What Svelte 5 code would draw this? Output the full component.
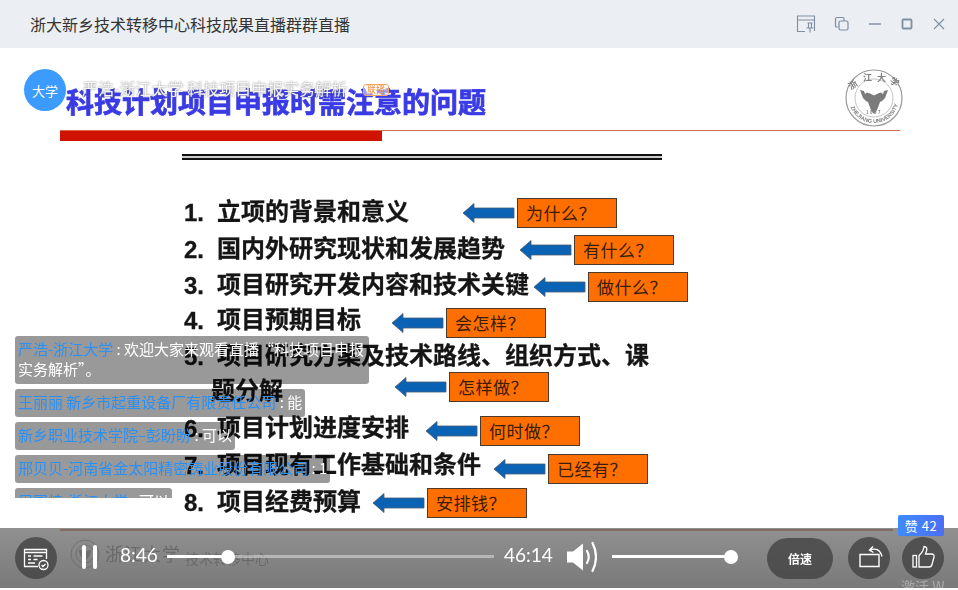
<script>
  const items = [
    { n: '1.', t: '立项的背景和意义', y: 210 },
    { n: '2.', t: '国内外研究现状和发展趋势', y: 247 },
    { n: '3.', t: '项目研究开发内容和技术关键', y: 283 },
    { n: '4.', t: '项目预期目标', y: 318 },
    { n: '5.', t: '项目研究方案及技术路线、组织方式、课', y: 354 },
    { n: '', t: '题分解', y: 389, indent: true },
    { n: '6.', t: '项目计划进度安排', y: 426 },
    { n: '7.', t: '项目现有工作基础和条件', y: 463 },
    { n: '8.', t: '项目经费预算', y: 500 }
  ];
  const tags = [
    { t: '为什么？', x: 517, y: 198 },
    { t: '有什么？', x: 574, y: 235 },
    { t: '做什么？', x: 588, y: 272 },
    { t: '会怎样？', x: 446, y: 308 },
    { t: '怎样做？', x: 449, y: 372 },
    { t: '何时做？', x: 480, y: 416 },
    { t: '已经有？', x: 548, y: 454 },
    { t: '安排钱？', x: 427, y: 488 }
  ];
  const chat = [
    { name: '严浩-浙江大学', msg: '欢迎大家来观看直播“科技项目申报实务解析”。' },
    { name: '王丽丽 新乡市起重设备厂有限责任公司', msg: '能' },
    { name: '新乡职业技术学院–彭盼盼', msg: '可以' },
    { name: '邢贝贝-河南省金太阳精密铸业股份有限公司', msg: '1' },
    { name: '周国炜-浙江大学', msg: '可以' }
  ];
</script>

<div class="win">
  <header class="head">
    <h1>浙大新乡技术转移中心科技成果直播群群直播</h1>
    <div class="tools">
      <svg width="20" height="20" viewBox="0 0 20 20" fill="none" stroke="#7f8fa3" stroke-width="1.100">
        <path d="M9 17.500H1.500V2h17v15M1.500 6h17" />
        <path d="M11.500 9h5M12.500 9v5h3V9M10.500 14h7M14 14v4.500" />
      </svg>
      <svg width="16" height="16" viewBox="0 0 16 16" fill="none" stroke="#7f8fa3" stroke-width="1.200">
        <path d="M4 11H2.500a1 1 0 0 1-1-1V3a1.500 1.500 0 0 1 1.500-1.500h6a1 1 0 0 1 1 1V5" />
        <rect x="5" y="5" width="9" height="9" rx="1.500" />
      </svg>
      <svg width="14" height="14" viewBox="0 0 14 14" stroke="#7f8fa3" stroke-width="1.400"><path d="M1 7h12" /></svg>
      <svg width="14" height="14" viewBox="0 0 14 14" fill="none" stroke="#7f8fa3" stroke-width="1.800"><rect x="2.500" y="2.500" width="9" height="9" rx="1" /></svg>
      <svg width="14" height="14" viewBox="0 0 14 14" stroke="#7f8fa3" stroke-width="1.100"><path d="M2 2l10 10M12 2L2 12" /></svg>
    </div>
  </header>

  <main class="stage">
    <div class="slide">
      <div class="slide-title">科技计划项目申报时需注意的问题</div>
      <div class="rule-thin"></div>
      <div class="rule-red"></div>
      <div class="rule-double"></div>

      <svg class="seal" width="58" height="60" viewBox="0 0 58 60">
        <circle cx="29" cy="29" r="28" fill="#fff" stroke="#9a9a9a" stroke-width="1.200" />
        <circle cx="29" cy="29" r="19" fill="none" stroke="#b5b5b5" stroke-width="0.800" />
        <path d="M15 21l4 1 1 3 2-1.500 3 1 4 2 4-2 3-1 2 1.500 1-3 4-1-3 8-3 3-2 1-3 8-3 4-3-4-3-8-2-1-3-3z" fill="#7a7a7a" />
        <path id="sealArc" d="M5 36a25 25 0 0 0 48 0" fill="none" />
        <text class="seal-text"><textPath href="#sealArc" startOffset="3%">ZHEJIANG UNIVERSITY</textPath></text>
        <text class="seal-year" x="29" y="45" text-anchor="middle">1897</text>
        <text class="seal-cn" x="6" y="21" transform="rotate(-35 6 21)">浙</text>
        <text class="seal-cn" x="18" y="12">江</text>
        <text class="seal-cn" x="32" y="12">大</text>
        <text class="seal-cn" x="44" y="13" transform="rotate(35 44 13)">学</text>
      </svg>

      {#each items as it}
        <div class="item" style="top:{it.y - 16}px">
          <span class="num">{it.n}</span><span class:indent={it.indent}>{it.t}</span>
        </div>
      {/each}

      {#each tags as tag}
        <svg class="arrow" width="54" height="22" viewBox="0 0 54 22" style="left:{tag.x - 55}px;top:{tag.y + 4}px">
          <path d="M1 11L12 1.500V6h40v10H12v4.500z" fill="#0a62b4" stroke="#4a5a70" stroke-width="0.800" />
        </svg>
        <div class="tag" style="left:{tag.x}px;top:{tag.y}px">{tag.t}</div>
      {/each}

      <svg class="foot-seal" width="30" height="30" viewBox="0 0 30 30" fill="none" stroke="#555" stroke-width="1">
        <circle cx="15" cy="15" r="14" /><circle cx="15" cy="15" r="9" />
        <path d="M9 11l6 2 6-2-2 6-4 5-4-5z" fill="#555" />
      </svg>
      <div class="foot-cal">浙江大学</div>
      <div class="foot-text">技术转移中心</div>
      <div class="foot-rule"></div>
    </div>

    <div class="badge-dept">大学</div>
    <div class="live-title">严浩-浙江大学 科技项目申报实务解析</div>
    <div class="live-tag">联播</div>

    <div class="chat">
      {#each chat as c}
        <div class="msg"><span class="who">{c.name}</span> : {c.msg}</div>
      {/each}
    </div>

    <div class="bar">
      <button class="round" aria-label="notes">
        <svg width="26" height="26" viewBox="0 0 26 26" fill="none" stroke="#fff" stroke-width="1.300">
          <path d="M15 21.500H1.500V4.500h22V14" />
          <path d="M1.500 7.500h22M5 11h3M10.500 11h9M5 14.500h3M10.500 14.500h4M5 18h7" />
          <circle cx="20.500" cy="20" r="4.500" /><path d="M18.500 20l1.500 1.500 2.500-2.500" />
        </svg>
      </button>
      <div class="pause"><i></i><i></i></div>
      <span class="time cur">8:46</span>
      <div class="track main"><div class="fill" style="width:18.700%"></div></div>
      <span class="time total">46:14</span>
      <svg class="vol" width="30" height="32" viewBox="0 0 30 32" fill="#fff">
        <path d="M0 10.500h6L16 2.500v27l-10-8H0z" />
        <path d="M20 10q3.500 6 0 12M25.500 2q7 14 0 28" fill="none" stroke="#fff" stroke-width="2.200" stroke-linecap="round" />
      </svg>
      <div class="track volume"><div class="fill" style="width:100%"></div></div>
      <button class="speed">倍速</button>
      <button class="round" aria-label="rotate">
        <svg width="28" height="28" viewBox="0 0 28 28" fill="none" stroke="#fff" stroke-width="1.400">
          <path d="M5 10.500h19v12H5z" />
          <path d="M15 6c5-2 10-1 12 6.500M18 2.500L14.500 6l4 2.500" />
        </svg>
      </button>
      <button class="round like" aria-label="like">
        <svg width="28" height="28" viewBox="0 0 28 28" fill="none" stroke="#fff" stroke-width="1.300">
          <rect x="4" y="11.500" width="3.500" height="11.500" />
          <path d="M10 11.500c2.500-2 4.500-5 5-9 2.500 0 3.500 2 2.500 4.500l-1 3h6c2 0 3 1.300 2.500 3l-2 7.500c-.3 1.500-1.500 2.500-3 2.500H10z" />
        </svg>
      </button>
    </div>

    <div class="likes">赞 42</div>
    <div class="activate">激活 W</div>
  </main>
</div>

<style>
  :global(body) { margin: 0; background: #fff; }
  * { box-sizing: border-box; }
  .win {
    width: 958px; height: 590px; overflow: hidden;
    display: flex; flex-direction: column;
    font-family: "Noto Sans CJK SC", "Liberation Sans", sans-serif;
  }
  .head {
    height: 48px; flex: none; background: #ebeef2;
    display: flex; align-items: center; justify-content: space-between;
    padding: 0 12px 0 30px;
  }
  h1 { margin: 0; font-size: 16px; font-weight: 400; color: #333; line-height: 1; }
  .tools { display: flex; align-items: center; gap: 18px; }
  .stage { position: relative; flex: 1; background: #fff; }
  /* free canvas: the slide's children use window coordinates */
  .slide { position: absolute; inset: -48px 0 0 0; filter: blur(0.4px); pointer-events: none; }
  .slide-title {
    position: absolute; left: 66px; top: 83px;
    font-size: 28px; font-weight: 700; line-height: 36px; color: #3a3be4;
    -webkit-text-stroke: 0.7px #3a3be4; white-space: nowrap;
  }
  .rule-thin { position: absolute; left: 60px; top: 130px; width: 840px; height: 1px; background: #d9694f; }
  .rule-red { position: absolute; left: 60px; top: 131px; width: 322px; height: 10px; background: #d01202; }
  .rule-double {
    position: absolute; left: 182px; top: 154px; width: 480px; height: 6px;
    border-top: 2px solid #111; border-bottom: 2px solid #111;
    background: #ccc;
  }
  .seal { position: absolute; left: 845px; top: 69px; }
  .seal-text { font: 700 5.500px "Liberation Sans", sans-serif; fill: #808080; }
  .seal-year { font: 700 4.500px "Liberation Sans", sans-serif; fill: #888; letter-spacing: 1.500px; }
  .seal-cn { font-size: 9px; font-weight: 700; fill: #808080; }
  .item {
    position: absolute; left: 184px; height: 32px; line-height: 32px;
    font-size: 24px; font-weight: 700; color: #151515; white-space: nowrap;
    -webkit-text-stroke: 0.3px #151515;
    display: flex;
  }
  .num { width: 33px; flex: none; font-family: "Liberation Sans", sans-serif; padding-top: 3px; }
  .indent { margin-left: -6px; }
  .arrow { position: absolute; }
  .tag {
    position: absolute; width: 100px; height: 30px;
    background: #ff6f00; border: 1px solid #4a3a30;
    font-size: 17px; line-height: 28px; color: #3a1c08; padding-left: 8px;
    letter-spacing: 0.500px; white-space: nowrap;
  }
  .foot-seal { position: absolute; left: 70px; top: 539px; }
  .foot-cal { position: absolute; left: 105px; top: 540px; font-size: 18px; color: #2c2c2c; letter-spacing: 1px; }
  .foot-text { position: absolute; left: 185px; top: 548px; font-size: 14px; color: #2c2c2c; }
  .foot-rule { position: absolute; left: 60px; top: 529px; width: 833px; height: 2px; background: #a83a08; }

  .badge-dept {
    position: absolute; left: 24px; top: 21px; width: 42px; height: 42px; border-radius: 50%;
    background: #3b9bff; color: #fff; font-size: 13px;
    display: flex; align-items: center; justify-content: center;
  }
  .live-title {
    position: absolute; left: 82px; top: 29px; font-size: 16px; line-height: 22px;
    color: #f4f4f4; text-shadow: 0 0 2px #777; white-space: nowrap;
  }
  .live-tag {
    position: absolute; left: 363px; top: 36px; width: 26px; height: 12px;
    border: 1px solid #f7a35c; border-radius: 3px; color: #f08a30;
    font-size: 9px; line-height: 10px; text-align: center; background: rgba(255,255,255,.5);
  }
  .chat {
    position: absolute; left: 15px; top: 288px; width: 354px; height: 162px; overflow: hidden;
    display: flex; flex-direction: column; align-items: flex-start; gap: 5px;
  }
  .msg {
    flex: none; padding: 3px 3px 5px; border-radius: 3px; background: rgba(0,0,0,.4);
    font-size: 15px; line-height: 20px; color: #fff;
  }
  .who { color: #2a90f5; }

  .bar {
    position: absolute; left: 0; right: 0; top: 480px; height: 60px;
    display: flex; align-items: center; padding: 0 14px 0 15px; color: #fff;
    background: linear-gradient(rgba(120,120,120,.82), rgba(110,110,110,.92));
  }
  button {
    border: 0; padding: 0; color: #fff; font: inherit; flex: none;
    background: rgba(60,60,60,.72);
  }
  .round {
    width: 42px; height: 42px; border-radius: 50%;
    display: flex; align-items: center; justify-content: center;
  }
  .like { margin-left: 12px; }
  .pause { display: flex; gap: 7px; margin-left: 25px; margin-bottom: 2px; }
  .pause i { width: 4px; height: 24px; background: #fff; border-radius: 2px; }
  .time { font: 400 19px/24px Lato, "Liberation Sans", sans-serif; flex: none; white-space: nowrap; margin-bottom: 6px; }
  .cur { margin-left: 23px; margin-right: 10px; width: 37px; }
  .total { width: 48px; }
  .track { height: 3px; background: rgba(255,255,255,.4); flex: none; margin-bottom: 3px; }
  .main { width: 327px; margin-right: 10px; }
  .fill { position: relative; height: 100%; background: #fff; }
  .fill::after {
    content: ""; position: absolute; right: -7px; top: -5.500px;
    width: 14px; height: 14px; border-radius: 50%; background: #fff;
  }
  .vol { margin-left: 15px; margin-right: 15px; flex: none; margin-bottom: 2px; }
  .volume { width: 119px; margin-right: 36px; }
  .speed { width: 66px; height: 41px; border-radius: 21px; font-size: 12px; font-weight: 700; margin-right: 15px; }
  .likes {
    position: absolute; left: 898px; top: 467px; width: 46px; height: 21px; border-radius: 2px;
    background: linear-gradient(90deg, #3f8bff, #4b6ff5); color: #fff;
    font-size: 13px; line-height: 21px; text-align: center; letter-spacing: .5px;
  }
  .activate {
    position: absolute; left: 901px; top: 530px; font-size: 14px; line-height: 16px;
    color: rgba(255,255,255,.35); white-space: nowrap;
  }
</style>
